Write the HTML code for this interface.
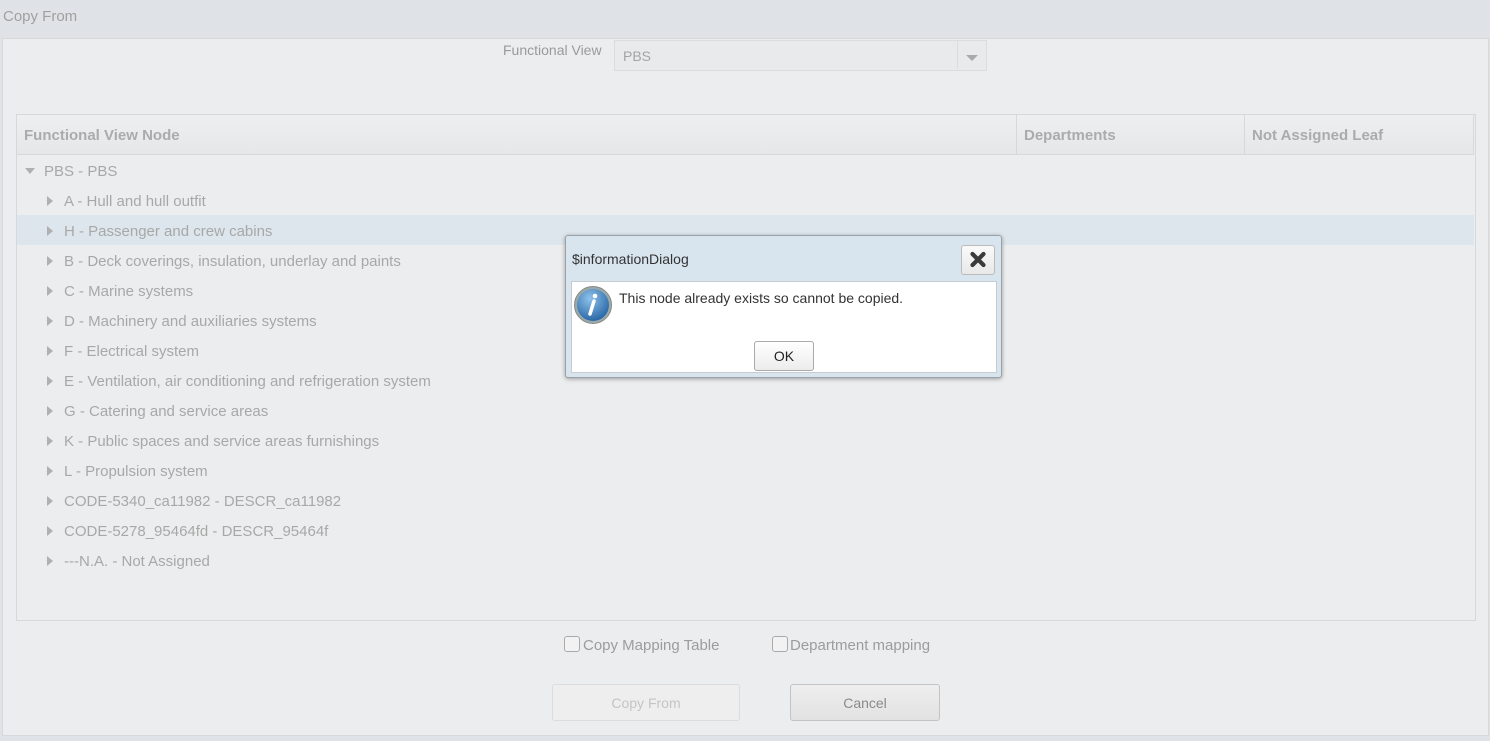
<!DOCTYPE html>
<html><head><style>
body{margin:0;width:1490px;height:741px;background:#dfe3e8;font-family:"Liberation Sans",sans-serif;position:relative;overflow:hidden}
.a{position:absolute}
.t{color:#a8a8a8;font-size:15px;white-space:nowrap}
.tri{position:absolute;width:0;height:0;border-top:5px solid transparent;border-bottom:5px solid transparent;border-left:6px solid #b0b0b0}
</style></head><body>
<div class="a t" style="left:3px;top:8px;color:#a0a0a0">Copy From</div>
<div class="a" style="left:2px;top:38px;width:1485px;height:696px;background:#ecedee;border:1px solid #d6d8da"></div>
<div class="a t" style="left:503px;top:42px;color:#9a9a9a;font-size:14px">Functional View</div>
<div class="a" style="left:614px;top:40px;width:371px;height:29px;background:#e9eaeb;border:1px solid #dcdcdc"></div>
<div class="a" style="left:957px;top:41px;width:1px;height:28px;background:#dcdcdc"></div>
<div class="a" style="left:966px;top:55px;border-left:6px solid transparent;border-right:6px solid transparent;border-top:6px solid #aaa"></div>
<div class="a t" style="left:623px;top:48px;color:#a4a4a4;font-size:14px">PBS</div>
<div class="a" style="left:16px;top:114px;width:1458px;height:505px;border:1px solid #d6d8da;background:#ecedee"></div>
<div class="a" style="left:17px;top:115px;width:1457px;height:39px;background:linear-gradient(#eeeff0,#e6e7e8);border-bottom:1px solid #d6d8da"></div>
<div class="a" style="left:1016px;top:115px;width:1px;height:39px;background:#d6d8da"></div>
<div class="a" style="left:1244px;top:115px;width:1px;height:39px;background:#d6d8da"></div>
<div class="a" style="left:1473px;top:115px;width:1px;height:39px;background:#d6d8da"></div>
<div class="a t" style="left:24px;top:127px;font-weight:bold;color:#ababab">Functional View Node</div>
<div class="a t" style="left:1024px;top:127px;font-weight:bold;color:#ababab">Departments</div>
<div class="a t" style="left:1252px;top:127px;font-weight:bold;color:#ababab">Not Assigned Leaf</div>
<div class="a" style="left:17px;top:215px;width:1457px;height:30px;background:#dde6ec"></div>
<div class="a" style="left:25px;top:168px;border-left:5px solid transparent;border-right:5px solid transparent;border-top:6px solid #b0b0b0"></div>
<div class="a t" style="left:44px;top:163px">PBS - PBS</div>
<div class="tri" style="left:47px;top:196px"></div><div class="a t" style="left:64px;top:193px">A - Hull and hull outfit</div>
<div class="tri" style="left:47px;top:226px"></div><div class="a t" style="left:64px;top:223px">H - Passenger and crew cabins</div>
<div class="tri" style="left:47px;top:256px"></div><div class="a t" style="left:64px;top:253px">B - Deck coverings, insulation, underlay and paints</div>
<div class="tri" style="left:47px;top:286px"></div><div class="a t" style="left:64px;top:283px">C - Marine systems</div>
<div class="tri" style="left:47px;top:316px"></div><div class="a t" style="left:64px;top:313px">D - Machinery and auxiliaries systems</div>
<div class="tri" style="left:47px;top:346px"></div><div class="a t" style="left:64px;top:343px">F - Electrical system</div>
<div class="tri" style="left:47px;top:376px"></div><div class="a t" style="left:64px;top:373px">E - Ventilation, air conditioning and refrigeration system</div>
<div class="tri" style="left:47px;top:406px"></div><div class="a t" style="left:64px;top:403px">G - Catering and service areas</div>
<div class="tri" style="left:47px;top:436px"></div><div class="a t" style="left:64px;top:433px">K - Public spaces and service areas furnishings</div>
<div class="tri" style="left:47px;top:466px"></div><div class="a t" style="left:64px;top:463px">L - Propulsion system</div>
<div class="tri" style="left:47px;top:496px"></div><div class="a t" style="left:64px;top:493px">CODE-5340_ca11982 - DESCR_ca11982</div>
<div class="tri" style="left:47px;top:526px"></div><div class="a t" style="left:64px;top:523px">CODE-5278_95464fd - DESCR_95464f</div>
<div class="tri" style="left:47px;top:556px"></div><div class="a t" style="left:64px;top:553px">---N.A. - Not Assigned</div>
<div class="a" style="left:564px;top:636px;width:14px;height:14px;border:1px solid #aaa;border-radius:3px;background:#f2f2f2"></div>
<div class="a t" style="left:583px;top:637px;color:#9c9c9c;font-size:15px">Copy Mapping Table</div>
<div class="a" style="left:772px;top:636px;width:14px;height:14px;border:1px solid #aaa;border-radius:3px;background:#f2f2f2"></div>
<div class="a t" style="left:790px;top:637px;color:#9c9c9c;font-size:15px">Department mapping</div>
<div class="a" style="left:552px;top:684px;width:186px;height:35px;border:1px solid #dcdcdc;border-radius:3px;background:#eeeeef"></div>
<div class="a t" style="left:552px;top:695px;width:188px;text-align:center;color:#c4c4c4;font-size:14px">Copy From</div>
<div class="a" style="left:790px;top:684px;width:148px;height:35px;border:1px solid #c4c4c4;border-radius:3px;background:linear-gradient(#eeeeee,#e2e2e2)"></div>
<div class="a t" style="left:790px;top:695px;width:150px;text-align:center;color:#8a8a8a;font-size:14px">Cancel</div>
<div class="a" style="left:565px;top:235px;width:435px;height:141px;background:#d9e5ee;border:1px solid #9aa2a8;border-radius:3px;box-shadow:0 1px 4px rgba(0,0,0,.35)"></div>
<div class="a" style="left:572px;top:251px;font-size:14px;color:#333">$informationDialog</div>
<div class="a" style="left:961px;top:245px;width:32px;height:28px;border:1px solid #bbb;border-radius:3px;background:linear-gradient(#fafafa,#e8e8e8)"></div>
<svg class="a" style="left:968px;top:250px" width="20" height="19" viewBox="0 0 20 19"><path d="M4.5 4L15.5 15M15.5 4L4.5 15" stroke="#3a3a3a" stroke-width="4.2" stroke-linecap="round"/></svg>
<div class="a" style="left:571px;top:281px;width:424px;height:90px;background:#fff;border:1px solid #c6ccd2"></div>
<svg class="a" style="left:573px;top:285px" width="40" height="40" viewBox="0 0 40 40"><defs><radialGradient id="g" cx=".4" cy=".3" r=".8"><stop offset="0" stop-color="#8ec2ea"/><stop offset="1" stop-color="#1d5c9e"/></radialGradient></defs><circle cx="20" cy="20" r="18.5" fill="#9aa" stroke="#888" stroke-width="1"/><circle cx="20" cy="20" r="16" fill="url(#g)"/><circle cx="22" cy="11" r="2.3" fill="#fff"/><path d="M21 16L17 29" stroke="#fff" stroke-width="3.5" stroke-linecap="round"/></svg>
<div class="a" style="left:619px;top:290px;font-size:14px;color:#333">This node already exists so cannot be copied.</div>
<div class="a" style="left:754px;top:341px;width:58px;height:28px;border:1px solid #aaa;border-radius:3px;background:linear-gradient(#fff,#ececec)"></div>
<div class="a" style="left:754px;top:348px;width:60px;text-align:center;font-size:14px;color:#222">OK</div>
</body></html>
